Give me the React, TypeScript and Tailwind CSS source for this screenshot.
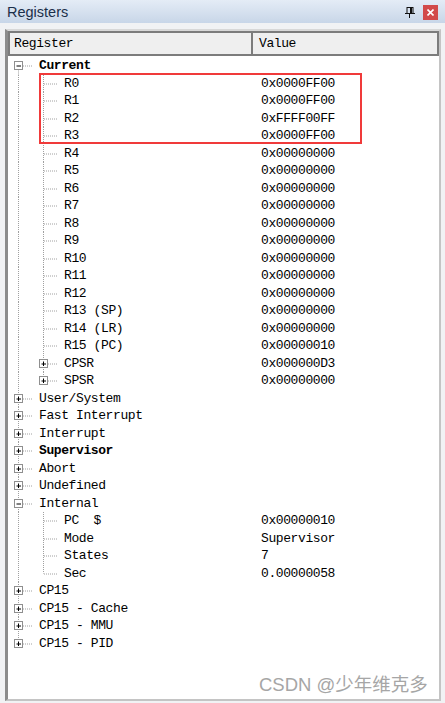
import React from "react";

type Col = "pass" | "tee" | "corner" | "first" | "none";
type Row = { label: string; value?: string; cols: Col[]; box?: "+" | "-"; bold?: boolean };

const mono = { fontFamily: '"Liberation Mono", "DejaVu Sans Mono", monospace' };

const current: Row[] = [
  ["R0", "0x0000FF00"],
  ["R1", "0x0000FF00"],
  ["R2", "0xFFFF00FF"],
  ["R3", "0x0000FF00"],
  ["R4", "0x00000000"],
  ["R5", "0x00000000"],
  ["R6", "0x00000000"],
  ["R7", "0x00000000"],
  ["R8", "0x00000000"],
  ["R9", "0x00000000"],
  ["R10", "0x00000000"],
  ["R11", "0x00000000"],
  ["R12", "0x00000000"],
  ["R13 (SP)", "0x00000000"],
  ["R14 (LR)", "0x00000000"],
  ["R15 (PC)", "0x00000010"],
].map(([label, value]) => ({ label, value, cols: ["pass", "tee"] as Col[] }));

const rows: Row[] = [
  { label: "Current", cols: ["first"], box: "-", bold: true },
  ...current,
  { label: "CPSR", value: "0x000000D3", cols: ["pass", "tee"], box: "+" },
  { label: "SPSR", value: "0x00000000", cols: ["pass", "corner"], box: "+" },
  { label: "User/System", cols: ["tee"], box: "+" },
  { label: "Fast Interrupt", cols: ["tee"], box: "+" },
  { label: "Interrupt", cols: ["tee"], box: "+" },
  { label: "Supervisor", cols: ["tee"], box: "+", bold: true },
  { label: "Abort", cols: ["tee"], box: "+" },
  { label: "Undefined", cols: ["tee"], box: "+" },
  { label: "Internal", cols: ["tee"], box: "-" },
  { label: "PC  $", value: "0x00000010", cols: ["pass", "tee"] },
  { label: "Mode", value: "Supervisor", cols: ["pass", "tee"] },
  { label: "States", value: "7", cols: ["pass", "tee"] },
  { label: "Sec", value: "0.00000058", cols: ["pass", "corner"] },
  { label: "CP15", cols: ["tee"], box: "+" },
  { label: "CP15 - Cache", cols: ["tee"], box: "+" },
  { label: "CP15 - MMU", cols: ["tee"], box: "+" },
  { label: "CP15 - PID", cols: ["corner"], box: "+" },
];

const H = 17.5;
const MID = 8.5;

function Gutter({ kind, last, box }: { kind: Col; last: boolean; box?: "+" | "-" }) {
  const dash = "1 1";
  const stroke = "#a0a0a0";
  return (
    <svg width="25" height={H} className="shrink-0 overflow-visible">
      {(kind === "pass" || kind === "tee") && (
        <line x1="10.5" y1="0" x2="10.5" y2={H} stroke={stroke} strokeDasharray={dash} />
      )}
      {kind === "corner" && (
        <line x1="10.5" y1="0" x2="10.5" y2={MID} stroke={stroke} strokeDasharray={dash} />
      )}
      {kind === "first" && (
        <line x1="10.5" y1={MID} x2="10.5" y2={H} stroke={stroke} strokeDasharray={dash} />
      )}
      {last && kind !== "pass" && (
        <line x1="11" y1={MID + 0.5} x2="25" y2={MID + 0.5} stroke={stroke} strokeDasharray={dash} />
      )}
      {last && box && (
        <g>
          <rect x="6.5" y={MID - 4} width="8" height="8" fill="#ffffff" stroke="#8f8f8f" />
          <line x1="8.5" y1={MID + 0.5} x2="13" y2={MID + 0.5} stroke="#000000" />
          {box === "+" && <line x1="10.5" y1={MID - 2} x2="10.5" y2={MID + 2.5} stroke="#000000" />}
        </g>
      )}
    </svg>
  );
}

function TreeRow({ row }: { row: Row }) {
  return (
    <div className="flex" style={{ height: H }}>
      <div className="flex w-[245px] items-center">
        {row.cols.map((c, i) => (
          <Gutter key={i} kind={c} last={i === row.cols.length - 1} box={row.box} />
        ))}
        <span
          className={`ml-[6px] whitespace-pre text-[13px] leading-none tracking-[-0.4px] text-[#000] ${row.bold ? "font-bold" : ""}`}
          style={mono}
        >
          {row.label}
        </span>
      </div>
      <div className="flex items-center pl-[8px]">
        <span className="whitespace-pre text-[13px] leading-none tracking-[-0.4px] text-[#000]" style={mono}>
          {row.value ?? ""}
        </span>
      </div>
    </div>
  );
}

export default function App() {
  return (
    <div className="relative h-[703px] w-[445px] overflow-hidden bg-[#f1f2f4]">
      <div className="flex h-[23px] items-center bg-gradient-to-b from-[#e4ecf6] to-[#c8d6e8] px-[7px] pt-[2px]">
        <span className="text-[14.5px] text-[#1b2f4a]" style={{ fontFamily: '"Liberation Sans", Arial, sans-serif' }}>
          Registers
        </span>
        <div className="ml-auto flex items-center gap-[8px]">
          <svg width="10" height="11" viewBox="0 0 10 11">
            <rect x="2" y="0.5" width="6" height="6" fill="none" stroke="#111" />
            <rect x="5" y="1" width="2" height="5" fill="#111" />
            <line x1="0" y1="6.5" x2="10" y2="6.5" stroke="#111" />
            <line x1="4.5" y1="7" x2="4.5" y2="11" stroke="#111" />
          </svg>
          <div className="flex h-[15px] w-[15px] items-center justify-center bg-[#d24a4a]">
            <svg width="7" height="7" viewBox="0 0 7 7">
              <path d="M0.5 0.5 L6.5 6.5 M6.5 0.5 L0.5 6.5" stroke="#fff" strokeWidth="1.6" />
            </svg>
          </div>
        </div>
      </div>
      <div className="ml-[5px] mt-[6px] h-[672px] w-[436px] border-l-[3px] border-t-[2px] border-r-[2px] border-b-[2px] border-l-[#8c8c8c] border-t-[#d8d8d8] border-r-[#c4c4c4] border-b-[#c4c4c4] bg-white">
        <div className="flex h-[25px] text-[13px] tracking-[-0.4px] text-[#000]" style={mono}>
          <div className="flex w-[245px] items-center border-2 border-[#7c7c7c] bg-[#efefef] pl-[4px] pt-[1px]">Register</div>
          <div className="flex flex-1 items-center border-2 border-l-0 border-[#7c7c7c] bg-[#efefef] pl-[6px] pt-[1px]">Value</div>
        </div>
        <div className="pt-[1px]">
          {rows.map((r, i) => (
            <TreeRow key={i} row={r} />
          ))}
        </div>
      </div>
      <div className="pointer-events-none absolute left-[39px] top-[73px] h-[71px] w-[323px] border-2 border-[#f03a3a]" />
      <div
        className="pointer-events-none absolute left-[259px] top-[671px] text-[18.5px] text-[#a6a6a6]"
        style={{ fontFamily: '"Liberation Sans", Arial, "Noto Sans CJK SC", sans-serif' }}
      >
        CSDN @少年维克多
      </div>
    </div>
  );
}
